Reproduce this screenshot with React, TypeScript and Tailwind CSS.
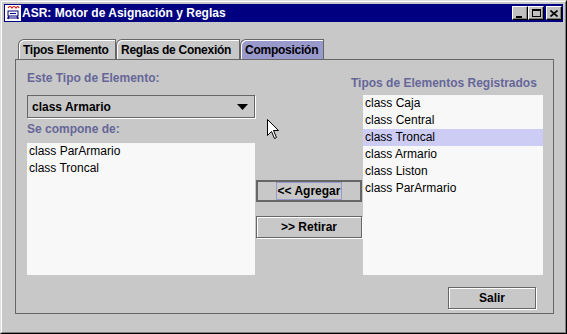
import React from "react";

const leftItems = ["class ParArmario", "class Troncal"];
const rightItems = [
  "class Caja",
  "class Central",
  "class Troncal",
  "class Armario",
  "class Liston",
  "class ParArmario",
];

function TitleButton({ children }: { children: React.ReactNode }) {
  return (
    <div className="w-[16px] h-[14px] bg-[#c0c0c0] border border-t-white border-l-white border-r-black border-b-black shadow-[inset_-1px_-1px_0_#808080] flex items-center justify-center">
      {children}
    </div>
  );
}

function Tab({ label, width, active }: { label: string; width: string; active?: boolean }) {
  return (
    <div
      className={`${width} h-[20px] pl-[4px] flex items-center whitespace-nowrap overflow-hidden rounded-tl-[6px] border border-b-0 border-[#666666] shadow-[inset_1px_1px_0_#ffffff] text-[12px] font-bold tracking-[-0.25px] text-black ${
        active ? "bg-[#9999cc]" : "bg-[#c8c8c8]"
      }`}
    >
      {label}
    </div>
  );
}

export default function App() {
  return (
    <div className="relative w-[567px] h-[334px] bg-[#c8c8c8] border border-t-[#dfdfdf] border-l-[#dfdfdf] border-r-black border-b-black font-['Liberation_Sans',Arial,sans-serif]">
      <div className="h-full border border-t-white border-l-white border-r-[#808080] border-b-[#808080] p-[2px] flex flex-col">
        {/* Title bar */}
        <div className="h-[18px] bg-[#000080] flex items-center pl-[1px] pr-[1px]">
          <svg width="16" height="16" viewBox="0 0 16 16" className="shrink-0">
            <rect x="0" y="0" width="16" height="16" fill="#ffffff" />
            <path d="M3 3 Q5 0 7 3 Q9 0 11 3 Q13 0 14 3" stroke="#e00000" strokeWidth="1.2" fill="none" />
            <rect x="3" y="6" width="10" height="5" fill="#ffffff" stroke="#000080" />
            <rect x="5" y="8" width="6" height="1" fill="#000080" />
            <path d="M2 13 H14 M4 11 L3 14 M12 11 L13 14" stroke="#000080" strokeWidth="1.2" />
          </svg>
          <span className="ml-[1px] text-white text-[12px] font-bold leading-none whitespace-nowrap">
            ASR: Motor de Asignación y Reglas
          </span>
          <div className="ml-auto flex items-center">
            <TitleButton>
              <div className="w-[6px] h-[2px] bg-black mt-[7px] -ml-[2px]" />
            </TitleButton>
            <TitleButton>
              <div className="w-[9px] h-[8px] border border-black border-t-2" />
            </TitleButton>
            <div className="ml-[2px]">
              <TitleButton>
                <svg width="8" height="7" viewBox="0 0 8 7">
                  <path d="M0.5 0.5 L7.5 6.5 M7.5 0.5 L0.5 6.5" stroke="black" strokeWidth="1.6" />
                </svg>
              </TitleButton>
            </div>
          </div>
        </div>

        {/* Body */}
        <div className="pt-[17px] pl-[11px]">
          <div className="flex ml-[3px]">
            <Tab label="Tipos Elemento" width="w-[98px]" />
            <Tab label="Reglas de Conexión" width="w-[124px]" />
            <Tab label="Composición" width="w-[84px]" active />
          </div>

          <div className="w-[539px] h-[255px] border border-[#666666] pt-[11px] pl-[11px] pr-[10px] flex flex-col">
            <div className="flex">
              {/* Left column */}
              <div className="w-[228px] flex flex-col">
                <div className="h-[14px] leading-[14px] text-[12px] font-bold text-[#666699]">
                  Este Tipo de Elemento:
                </div>
                <div className="mt-[10px] h-[23px] border border-[#666666] shadow-[1px_1px_0_#ffffff] flex items-center pl-[4px] pr-[5px]">
                  <span className="text-[12px] font-bold text-black">class Armario</span>
                  <svg width="11" height="6" viewBox="0 0 11 6" className="ml-auto mr-[1px]">
                    <path d="M0 0 H11 L5.5 6 Z" fill="black" />
                  </svg>
                </div>
                <div className="mt-[4px] h-[14px] leading-[14px] text-[12px] font-bold text-[#666699]">
                  Se compone de:
                </div>
                <div className="mt-[7px] h-[132px] bg-[#f8f8f8]">
                  {leftItems.map((item) => (
                    <div key={item} className="h-[17px] leading-[17px] pl-[2px] text-[12px] text-black">
                      {item}
                    </div>
                  ))}
                </div>
              </div>

              {/* Middle column */}
              <div className="w-[108px] pt-[109px] flex flex-col">
                <div className="ml-[1px] w-[106px] h-[22px] border-2 border-[#666666] bg-[#c8c8c8] flex items-center justify-center">
                  <span className="border border-[#9999cc] px-[1px] text-[12px] font-bold text-black leading-[16px]">
                    &lt;&lt; Agregar
                  </span>
                </div>
                <div className="mt-[14px] ml-[1px] w-[106px] h-[22px] border border-[#666666] shadow-[inset_1px_1px_0_#ffffff,1px_1px_0_#ffffff] flex items-center justify-center">
                  <span className="text-[12px] font-bold text-black">&gt;&gt; Retirar</span>
                </div>
              </div>

              {/* Right column */}
              <div className="w-[180px] flex flex-col pt-[5px]">
                <div className="-ml-[12px] h-[14px] leading-[14px] whitespace-nowrap text-[12px] font-bold text-[#666699]">
                  Tipos de Elementos Registrados
                </div>
                <div className="mt-[5px] h-[180px] bg-[#f8f8f8]">
                  {rightItems.map((item, i) => (
                    <div
                      key={item}
                      className={`h-[17px] leading-[17px] pl-[2px] text-[12px] text-black ${
                        i === 2 ? "bg-[#ccccf5]" : ""
                      }`}
                    >
                      {item}
                    </div>
                  ))}
                </div>
              </div>
            </div>

            <div className="mt-[12px] flex justify-end pr-[7px]">
              <div className="w-[88px] h-[22px] border border-[#666666] shadow-[inset_1px_1px_0_#ffffff,1px_1px_0_#ffffff] flex items-center justify-center">
                <span className="text-[12px] font-bold text-black">Salir</span>
              </div>
            </div>
          </div>
        </div>
      </div>

      {/* Mouse pointer */}
      <svg
        width="13"
        height="21"
        viewBox="0 0 13 21"
        className="absolute left-[266px] top-[118px]"
      >
        <path
          d="M0.5 0.5 L0.5 16.5 L4.5 12.5 L7.5 19.5 L9.5 18.5 L6.5 11.5 L11.5 11.5 Z"
          fill="white"
          stroke="black"
          strokeWidth="1"
        />
      </svg>
    </div>
  );
}
